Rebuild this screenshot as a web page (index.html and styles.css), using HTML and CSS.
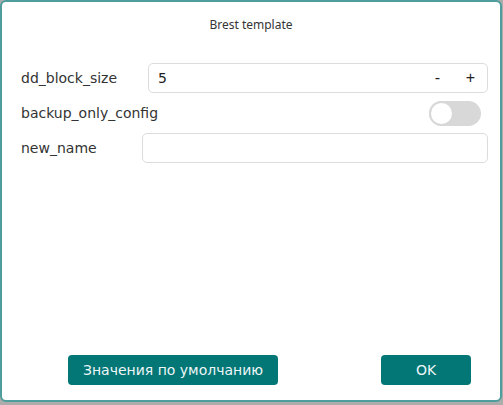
FILE: index.html
```html
<!DOCTYPE html>
<html>
    <head>
        <title>Brest template</title>
        <link rel="stylesheet" href="styles.css">
    </head>
    <body>
        <div class="dialog">
            <div class="title">Brest template</div>
            <form class="fields">
                <div class="row">
                    <label class="label label_wide">dd_block_size</label>
                    <div class="spinbox">
                        <span class="value">5</span>
                        <span class="step">-</span>
                        <span class="step">+</span>
                    </div>
                </div>
                <div class="row">
                    <label class="label">backup_only_config</label>
                    <span class="toggle"><span class="knob"></span></span>
                </div>
                <div class="row">
                    <label class="label label_narrow">new_name</label>
                    <input class="textbox" type="text" />
                </div>
            </form>
            <div class="footer">
                <button class="btn btn_defaults">Значения по умолчанию</button>
                <button class="btn btn_ok">OK</button>
            </div>
        </div>
    </body>
</html>
```

FILE: styles.css
```css
body{
    margin: 0;
    padding: 0;
    background: #acacac;
    font-family: "DejaVu Sans", sans-serif;
    color: #333;
}

.dialog{
    box-sizing: border-box;
    width: 502px;
    height: 402px;
    background: white;
    border: 2px solid #4f9c9c;
    border-radius: 6px;
    display: flex;
    flex-direction: column;
}

.title{
    font-family: "Noto Sans", sans-serif;
    font-size: 12px;
    line-height: 16px;
    text-align: center;
    padding-top: 15px;
    color: #353535;
}

.fields{
    display: flex;
    flex-direction: column;
    gap: 5px;
    padding: 30px 12px 0 19px;
}

.row{
    display: flex;
    align-items: center;
    justify-content: space-between;
    height: 30px;
}

.label{
    font-size: 14px;
    color: #333;
}

.label_wide{
    width: 127px;
    flex: none;
}

.label_narrow{
    width: 121px;
    flex: none;
}

.spinbox{
    flex: 1;
    display: flex;
    align-items: center;
    height: 30px;
    box-sizing: border-box;
    border: 1px solid #dcdcdc;
    border-radius: 5px;
    font-size: 14px;
}

.spinbox .value{
    flex: 1;
    padding-left: 9px;
    color: #222;
}

.spinbox .step{
    width: 33px;
    text-align: center;
    font-family: "Liberation Sans", sans-serif;
    font-size: 16px;
    color: #222;
}

.toggle{
    position: relative;
    width: 52px;
    height: 25px;
    margin-right: 7px;
    background: #d8d8d8;
    border-radius: 13px;
}

.toggle .knob{
    position: absolute;
    top: 0;
    left: 0;
    width: 25px;
    height: 25px;
    box-sizing: border-box;
    background: white;
    border: 2px solid #d8d8d8;
    border-radius: 50%;
}

.textbox{
    flex: 1;
    height: 30px;
    box-sizing: border-box;
    border: 1px solid #dcdcdc;
    border-radius: 5px;
    outline: none;
}

.footer{
    margin-top: auto;
    display: flex;
    justify-content: space-between;
    padding: 0 29px 15px 66px;
}

.btn{
    height: 30px;
    border: none;
    border-radius: 4px;
    background: #037676;
    color: #eef7f7;
    font-family: "DejaVu Sans", sans-serif;
    font-size: 14px;
    padding: 0;
}

.btn_defaults{
    width: 210px;
}

.btn_ok{
    width: 90px;
}
```
